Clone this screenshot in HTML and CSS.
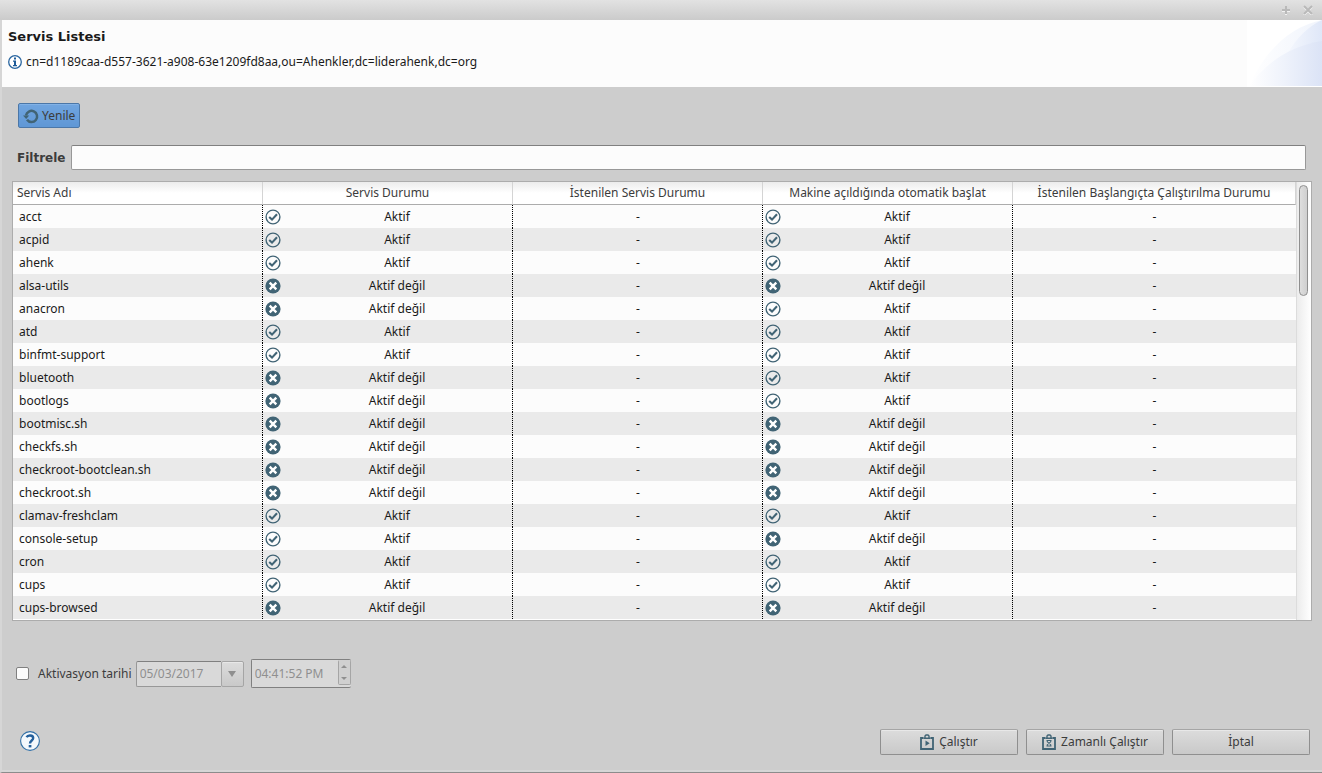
FILE: index.html
```html
<!DOCTYPE html>
<html lang="tr">
<head>
<meta charset="utf-8">
<title>Servis Listesi</title>
<link rel="stylesheet" href="styles.css">
</head>
<body>
<svg class="sprite" aria-hidden="true">
  <symbol id="on" viewBox="0 0 16 16"><circle cx="8" cy="8" r="6.9" fill="none" stroke="#416475" stroke-width="1.4"/><path d="M4.200 8 7 10.600 12 5.200" fill="none" stroke="#416475" stroke-width="2.100"/></symbol>
  <symbol id="off" viewBox="0 0 16 16"><circle cx="8" cy="8" r="7.6" fill="#416475"/><path d="M4.700 4.700 11.300 11.300M11.300 4.700 4.700 11.300" fill="none" stroke="#fff" stroke-width="2.400"/></symbol>
</svg>
<div class="titlebar">
  <button class="winbtn" aria-label="Büyüt"><svg width="10" height="10" viewBox="0 0 10 10"><path d="M1 6h8M5 2v8" stroke="#f2f2f2" stroke-width="2"/><path d="M1 5h8M5 1v8" stroke="#b9b9b9" stroke-width="2"/></svg></button>
  <button class="winbtn" aria-label="Kapat"><svg width="10" height="10" viewBox="0 0 10 10"><path d="M1 2l8 8M9 2l-8 8" stroke="#f2f2f2" stroke-width="2"/><path d="M1 1l8 8M9 1l-8 8" stroke="#b9b9b9" stroke-width="2"/></svg></button>
</div>
<div class="dialog">
  <header class="banner">
    <div class="heading">
      <h1>Servis Listesi</h1>
      <p class="message">
        <svg width="14" height="14" viewBox="0 0 14 14"><circle cx="7" cy="7" r="6.3" fill="#fff" stroke="#2a66a0" stroke-width="1.3"/><path d="M6 2.6h2v1.8H6zM5 5.6h3v4.4h1v1.2H5V10h1V6.8H5z" fill="#1f5c99"/></svg>
        <span>cn=d1189caa-d557-3621-a908-63e1209fd8aa,ou=Ahenkler,dc=liderahenk,dc=org</span>
      </p>
    </div>
    <svg class="wave" width="75" height="67" viewBox="0 0 75 67">
      <defs><linearGradient id="g1"><stop offset="0" stop-color="#fff"/><stop offset="1" stop-color="#f0f4fc"/></linearGradient><linearGradient id="g3"><stop offset="0" stop-color="#f4f7fd"/><stop offset="1" stop-color="#dfe7f8"/></linearGradient><linearGradient id="g2"><stop offset="0" stop-color="#fff"/><stop offset=".5" stop-color="#eef2fb"/><stop offset="1" stop-color="#dbe3f6"/></linearGradient></defs>
      <path d="M0 0h75v67H0z" fill="#fff"/>
      <path d="M2 66Q28 10 75 0v66z" fill="url(#g1)"/>
      <path d="M41 33Q54 10 75 0v30z" fill="url(#g3)"/>
      <path d="M2 66Q30 28 75 21v45z" fill="url(#g2)"/>
    </svg>
  </header>
  <main class="content">
    <div class="tools">
      <button class="btn refresh"><svg width="16" height="16" viewBox="0 0 16 16"><path d="M4 11.8A5.6 5.6 0 1 0 3 7.5" fill="none" stroke="#416475" stroke-width="2.5"/><path d="M0 7.6h6.2L3.2 11z" fill="#416475"/></svg>Yenile</button>
    </div>
    <div class="filter">
      <label for="q">Filtrele</label>
      <input id="q" class="field" type="text">
    </div>
    <div class="grid">
      <table>
        <colgroup><col class="col"><col class="col"><col class="col"><col class="col"><col></colgroup>
        <thead><tr><th>Servis Adı</th><th>Servis Durumu</th><th>İstenilen Servis Durumu</th><th>Makine açıldığında otomatik başlat</th><th>İstenilen Başlangıçta Çalıştırılma Durumu</th></tr></thead>
        <tbody>
          <tr><td>acct</td><td class="st"><svg><use href="#on"/></svg>Aktif</td><td>-</td><td class="st"><svg><use href="#on"/></svg>Aktif</td><td>-</td></tr>
          <tr><td>acpid</td><td class="st"><svg><use href="#on"/></svg>Aktif</td><td>-</td><td class="st"><svg><use href="#on"/></svg>Aktif</td><td>-</td></tr>
          <tr><td>ahenk</td><td class="st"><svg><use href="#on"/></svg>Aktif</td><td>-</td><td class="st"><svg><use href="#on"/></svg>Aktif</td><td>-</td></tr>
          <tr><td>alsa-utils</td><td class="st"><svg><use href="#off"/></svg>Aktif değil</td><td>-</td><td class="st"><svg><use href="#off"/></svg>Aktif değil</td><td>-</td></tr>
          <tr><td>anacron</td><td class="st"><svg><use href="#off"/></svg>Aktif değil</td><td>-</td><td class="st"><svg><use href="#on"/></svg>Aktif</td><td>-</td></tr>
          <tr><td>atd</td><td class="st"><svg><use href="#on"/></svg>Aktif</td><td>-</td><td class="st"><svg><use href="#on"/></svg>Aktif</td><td>-</td></tr>
          <tr><td>binfmt-support</td><td class="st"><svg><use href="#on"/></svg>Aktif</td><td>-</td><td class="st"><svg><use href="#on"/></svg>Aktif</td><td>-</td></tr>
          <tr><td>bluetooth</td><td class="st"><svg><use href="#off"/></svg>Aktif değil</td><td>-</td><td class="st"><svg><use href="#on"/></svg>Aktif</td><td>-</td></tr>
          <tr><td>bootlogs</td><td class="st"><svg><use href="#off"/></svg>Aktif değil</td><td>-</td><td class="st"><svg><use href="#on"/></svg>Aktif</td><td>-</td></tr>
          <tr><td>bootmisc.sh</td><td class="st"><svg><use href="#off"/></svg>Aktif değil</td><td>-</td><td class="st"><svg><use href="#off"/></svg>Aktif değil</td><td>-</td></tr>
          <tr><td>checkfs.sh</td><td class="st"><svg><use href="#off"/></svg>Aktif değil</td><td>-</td><td class="st"><svg><use href="#off"/></svg>Aktif değil</td><td>-</td></tr>
          <tr><td>checkroot-bootclean.sh</td><td class="st"><svg><use href="#off"/></svg>Aktif değil</td><td>-</td><td class="st"><svg><use href="#off"/></svg>Aktif değil</td><td>-</td></tr>
          <tr><td>checkroot.sh</td><td class="st"><svg><use href="#off"/></svg>Aktif değil</td><td>-</td><td class="st"><svg><use href="#off"/></svg>Aktif değil</td><td>-</td></tr>
          <tr><td>clamav-freshclam</td><td class="st"><svg><use href="#on"/></svg>Aktif</td><td>-</td><td class="st"><svg><use href="#on"/></svg>Aktif</td><td>-</td></tr>
          <tr><td>console-setup</td><td class="st"><svg><use href="#on"/></svg>Aktif</td><td>-</td><td class="st"><svg><use href="#off"/></svg>Aktif değil</td><td>-</td></tr>
          <tr><td>cron</td><td class="st"><svg><use href="#on"/></svg>Aktif</td><td>-</td><td class="st"><svg><use href="#on"/></svg>Aktif</td><td>-</td></tr>
          <tr><td>cups</td><td class="st"><svg><use href="#on"/></svg>Aktif</td><td>-</td><td class="st"><svg><use href="#on"/></svg>Aktif</td><td>-</td></tr>
          <tr><td>cups-browsed</td><td class="st"><svg><use href="#off"/></svg>Aktif değil</td><td>-</td><td class="st"><svg><use href="#off"/></svg>Aktif değil</td><td>-</td></tr>
        </tbody>
      </table>
      <div class="track"><div class="thumb"></div></div>
    </div>
    <div class="schedule">
      <input id="act" class="check" type="checkbox">
      <label for="act">Aktivasyon tarihi</label>
      <div class="date">
        <input class="field" type="text" value="05/03/2017" aria-label="Tarih" disabled>
        <button class="btn" aria-label="Takvim" disabled><svg width="8" height="6" viewBox="0 0 8 6"><path d="M0 0h8L4 6z" fill="#8f8f8f"/></svg></button>
      </div>
      <div class="time">
        <input type="text" value="04:41:52 PM" aria-label="Saat" disabled>
        <div class="spin">
          <button aria-label="Artır" disabled><svg width="6" height="3" viewBox="0 0 6 3"><path d="M0 3h6L3 0z" fill="#8f8f8f"/></svg></button>
          <button aria-label="Azalt" disabled><svg width="6" height="3" viewBox="0 0 6 3"><path d="M0 0h6L3 3z" fill="#8f8f8f"/></svg></button>
        </div>
      </div>
    </div>
  </main>
  <footer class="actions">
    <button class="help" aria-label="Yardım"><svg width="20" height="20" viewBox="0 0 20 20"><circle cx="10" cy="10" r="9.4" fill="#f3f8fc" stroke="#2f6ea5" stroke-width="1.1"/><path d="M6.6 6.3C7.6 3.9 13.2 3.7 13.2 7.1 13.2 9.5 10 9.6 10 12.6" fill="none" stroke="#24609c" stroke-width="2.4"/><path d="M8.7 14h2.7v2.4H8.7z" fill="#24609c"/></svg></button>
    <button class="btn wide"><svg width="14" height="16" viewBox="0 0 14 16"><path d="M3.500 4H1v11h12V4h-2.500" fill="none" stroke="#416475" stroke-width="1.800"/><path d="M3.500 4.200h7M5 3.800V2l1-1h2l1 1v1.800" fill="none" stroke="#416475" stroke-width="1.400"/><path d="M5.500 6.500v5.500L9.700 9.200z" fill="#416475"/></svg>Çalıştır</button>
    <button class="btn wide"><svg width="14" height="16" viewBox="0 0 14 16"><path d="M3.500 4H1v11h12V4h-2.500" fill="none" stroke="#416475" stroke-width="1.800"/><path d="M3.500 4.200h7M5 3.800V2l1-1h2l1 1v1.800" fill="none" stroke="#416475" stroke-width="1.400"/><path d="M4.500 6.500h5M4.500 12h5M5.300 6.500v1.300L8.700 10.700V12M8.700 6.500v1.300L5.300 10.700V12" fill="none" stroke="#416475" stroke-width="1.100"/></svg>Zamanlı Çalıştır</button>
    <button class="btn wide">İptal</button>
  </footer>
</div>
</body>
</html>
```

FILE: styles.css
```css
* { box-sizing: border-box; }
body {
  margin: 0;
  min-height: 100vh;
  display: flex;
  flex-direction: column;
  background: #cdcdcd;
  color: #3c3c3c;
  font: 12px/16px "Noto Sans", "Open Sans", sans-serif;
}
button, input { font: inherit; color: inherit; margin: 0; }
.sprite { position: absolute; width: 0; height: 0; }

.titlebar {
  height: 20px;
  padding: 0 9px;
  display: flex;
  justify-content: flex-end;
  align-items: center;
  gap: 12px;
  background: linear-gradient(#e2e2e2, #cbcbcb);
}
.winbtn { display: flex; padding: 0; border: 0; background: none; }

.dialog {
  flex: 1;
  display: flex;
  flex-direction: column;
  border-left: 2px solid #d6d6d6;
  border-bottom: 1px solid #8c8c8c;
  box-shadow: inset 0 -2px #d6d6d6;
}
.banner {
  display: flex;
  justify-content: space-between;
  background: #fcfcfc;
  color: #1a1a1a;
}
.heading { padding: 9px 6px 0; }
.heading h1 { margin: 0 0 9px; font: bold 13px/16px "DejaVu Sans", sans-serif; }
.message { margin: 0; display: flex; align-items: center; gap: 4px; }
.wave { display: block; }

.content { flex: 1; display: flex; flex-direction: column; padding: 16px 10px 0; }
.tools { padding: 0 6px; display: flex; }
.btn {
  height: 26px;
  display: flex;
  align-items: center;
  justify-content: center;
  gap: 5px;
  padding: 0 4px;
  border: 1px solid #8f8f8f;
  border-top-color: #a5a5a5;
  border-radius: 2px;
  background: linear-gradient(#dcdcdc, #c9c9c9);
  box-shadow: inset 0 1px #e8e8e8;
}
.refresh {
  height: 25px;
  gap: 3px;
  border-color: #4b77a8;
  background: linear-gradient(#70a5e0, #5f97d5);
  box-shadow: inset 0 1px #82b2e6;
}
.filter { display: flex; align-items: center; gap: 6px; padding: 17px 6px 11px 5px; }
.filter label { font: bold 12px/16px "DejaVu Sans", sans-serif; }
.field {
  height: 26px;
  min-width: 0;
  padding: 0 3px;
  border: 1px solid #989898;
  border-top-color: #808080;
  border-radius: 2px;
  background: #fcfcfc;
}
.filter .field { flex: 1; height: 25px; }

.grid {
  flex: 1;
  display: flex;
  align-items: stretch;
  border: 1px solid #acacac;
  background: #fff;
}
table { flex: 1; align-self: flex-start; table-layout: fixed; border-collapse: separate; border-spacing: 0; }
.col { width: 250px; }
th, td { height: 23px; padding: 0; text-align: center; white-space: nowrap; font-weight: normal; }
th {
  border-right: 1px solid #d4d4d4;
  border-bottom: 1px solid #acacac;
  background: linear-gradient(#ececec, #fff 50%);
}
th:first-child { text-align: left; padding-left: 4px; }
td { background: #fcfcfc; color: #1a1a1a; }
tr:nth-child(even) td { background-color: #eaeaea; }
td:not(:last-child) {
  background-image: repeating-linear-gradient(#000 0 1px, transparent 1px 2px);
  background-size: 1px 100%;
  background-position: right top;
  background-repeat: no-repeat;
}
td:first-child { text-align: left; padding-left: 6px; }
.st { padding-left: 2px; }
.st svg { float: left; width: 16px; height: 16px; }
.track { width: 15px; padding: 3px 3px 0 2px; border-left: 1px solid #dcdcdc; background: linear-gradient(90deg, #ececec, #fff); }
.thumb {
  width: 9px;
  height: 111px;
  border: 1px solid #8f8f8f;
  border-radius: 5px;
  background: linear-gradient(90deg, #dedede, #cfcfcf);
}

.schedule { display: flex; align-items: center; padding: 38px 4px 0; }
.check {
  appearance: none;
  width: 13px;
  height: 13px;
  margin-right: 9px;
  border: 1px solid #808080;
  border-radius: 2px;
  background: #fcfcfc;
}
.date { display: flex; margin: 0 7px 0 4px; }
.schedule input:disabled { color: #8f8f8f; background: #d9d9d9; }
.date .field { width: 85px; border-right: 0; border-radius: 2px 0 0 2px; }
.date .btn { width: 23px; border-color: #a5a5a5; }
.time {
  width: 100px;
  height: 29px;
  display: flex;
  border: 1px solid #808080;
  border-right: 0;
  border-radius: 2px;
  background: #d9d9d9;
}
.time input { flex: 1; min-width: 0; padding: 0 3px; border: 0; }
.spin { width: 13px; height: 25px; display: flex; flex-direction: column; border: 1px solid #a5a5a5; border-top: 0; border-radius: 2px; }
.spin button { flex: 1; display: flex; align-items: center; justify-content: center; padding: 0; border: 0; background: #d0d0d0; }

.actions { display: flex; align-items: center; gap: 8px; padding: 41px 12px 17px 18px; }
.help { display: flex; margin-right: auto; padding: 0 0 3px; border: 0; background: none; }
.wide { width: 138px; }
```
